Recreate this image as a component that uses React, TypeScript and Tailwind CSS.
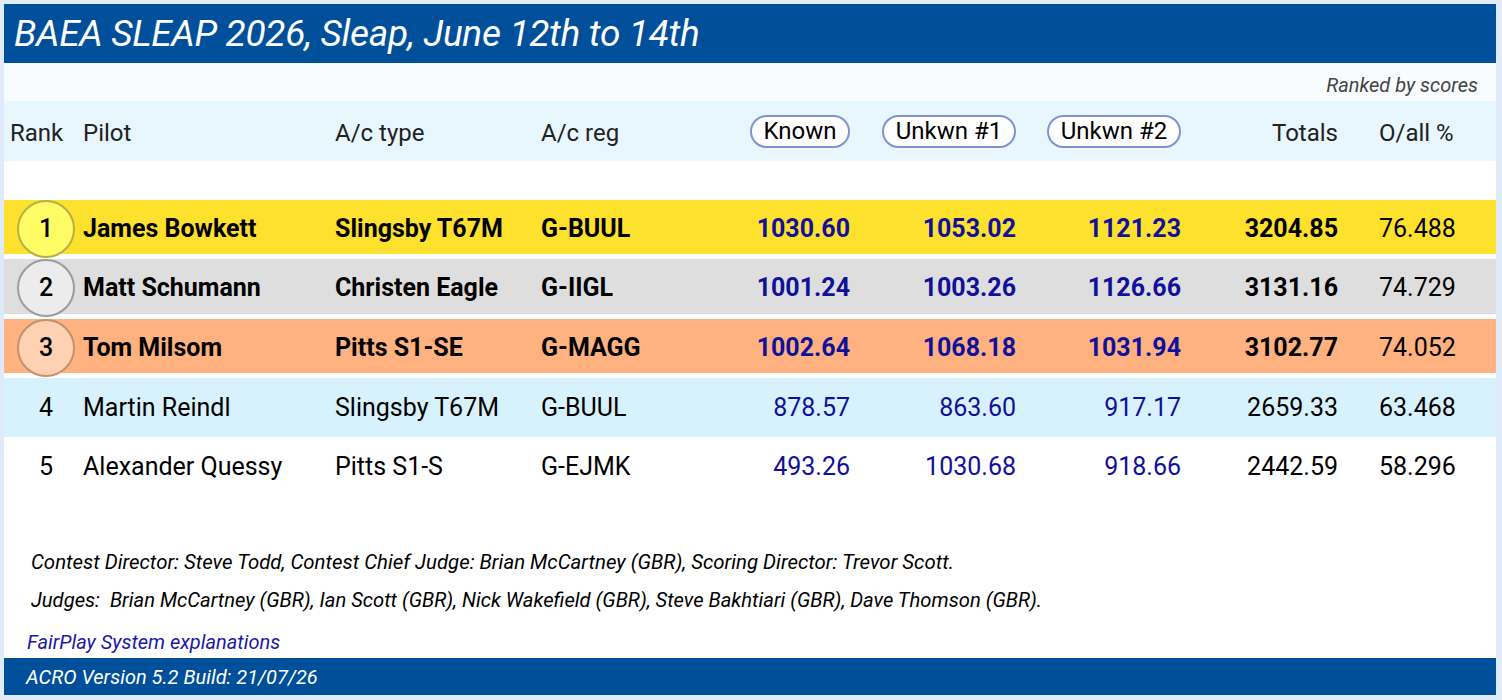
import React from "react";

type Row = {
  rank: number;
  pilot: string;
  type: string;
  reg: string;
  known: string;
  u1: string;
  u2: string;
  total: string;
  oall: string;
};

const rows: Row[] = [
  { rank: 1, pilot: "James Bowkett", type: "Slingsby T67M", reg: "G-BUUL", known: "1030.60", u1: "1053.02", u2: "1121.23", total: "3204.85", oall: "76.488" },
  { rank: 2, pilot: "Matt Schumann", type: "Christen Eagle", reg: "G-IIGL", known: "1001.24", u1: "1003.26", u2: "1126.66", total: "3131.16", oall: "74.729" },
  { rank: 3, pilot: "Tom Milsom", type: "Pitts S1-SE", reg: "G-MAGG", known: "1002.64", u1: "1068.18", u2: "1031.94", total: "3102.77", oall: "74.052" },
  { rank: 4, pilot: "Martin Reindl", type: "Slingsby T67M", reg: "G-BUUL", known: "878.57", u1: "863.60", u2: "917.17", total: "2659.33", oall: "63.468" },
  { rank: 5, pilot: "Alexander Quessy", type: "Pitts S1-S", reg: "G-EJMK", known: "493.26", u1: "1030.68", u2: "918.66", total: "2442.59", oall: "58.296" },
];

const GRID = "grid grid-cols-[79px_252px_206px_209px_100px_166px_165px_157px_158px] items-center";

const rowStyles: Record<number, { row: string; circle: string }> = {
  1: { row: "bg-[#fee12c] h-[54px] mb-[5px]", circle: "bg-[#fffc66] border-[#b8b046]" },
  2: { row: "bg-[#dedede] h-[55px] mb-[5px]", circle: "bg-[#ececec] border-[#9c9c9c]" },
  3: { row: "bg-[#ffb17f] h-[54px] mb-[5px]", circle: "bg-[#fed1b3] border-[#c4916e]" },
  4: { row: "bg-[#d7f2fd] h-[59px]", circle: "" },
  5: { row: "bg-white h-[60px]", circle: "" },
};

function Pill({ w, children }: { w: string; children: React.ReactNode }) {
  return (
    <span className={`inline-flex items-center justify-center h-[33px] rounded-full border-2 border-[#7f93d4] bg-white text-[24px] text-black leading-none ${w}`}>
      {children}
    </span>
  );
}

export default function App() {
  return (
    <div
      className="min-h-[700px] w-[1502px] bg-[#dfeafa] pt-[4px] pl-[4px] pb-[5px]"
      style={{ fontFamily: "Roboto, 'Noto Sans', Arial, sans-serif" }}
    >
      <div className="w-[1492px] bg-white flex flex-col">
        {/* Title */}
        <div className="h-[59px] bg-[#004f9b] flex items-center pl-[10px]">
          <h1 className="text-white italic text-[37px] leading-none tracking-[-0.3px]">
            BAEA SLEAP 2026, Sleap, June 12th to 14th
          </h1>
        </div>

        {/* Ranked by */}
        <div className="h-[38px] bg-[#f9fcff] flex items-center justify-end pr-[18px] pt-[6px]">
          <span className="italic text-[20px] text-[#444]">Ranked by scores</span>
        </div>

        {/* Header */}
        <div className={`${GRID} h-[60px] bg-[#e8f6fd] text-[24px] text-[#222] pt-[3px]`}>
          <div className="pl-[6px]">Rank</div>
          <div>Pilot</div>
          <div>A/c type</div>
          <div>A/c reg</div>
          <div className="flex justify-end -mt-[3px]">
            <Pill w="w-[100px]">Known</Pill>
          </div>
          <div className="flex justify-end -mt-[3px]">
            <Pill w="w-[134px]">Unkwn #1</Pill>
          </div>
          <div className="flex justify-end -mt-[3px]">
            <Pill w="w-[134px]">Unkwn #2</Pill>
          </div>
          <div className="text-right">Totals</div>
          <div className="pl-[41px]">O/all %</div>
        </div>

        {/* spacer */}
        <div className="h-[39px]" />

        {/* Rows */}
        <div className="flex flex-col">
          {rows.map((r) => {
            const st = rowStyles[r.rank];
            const top = r.rank <= 3;
            const weight = top ? "font-bold" : "font-normal";
            return (
              <div key={r.rank} className={`${GRID} ${st.row} text-[25px] text-black`}>
                <div className="flex items-center justify-center pl-[5px]">
                  {top ? (
                    <span className={`w-[58px] h-[58px] shrink-0 rounded-full border-2 flex items-center justify-center ${st.circle}`}>
                      <span className="text-[25px] font-medium">{r.rank}</span>
                    </span>
                  ) : (
                    <span className="text-[25px]">{r.rank}</span>
                  )}
                </div>
                <div className={weight}>{r.pilot}</div>
                <div className={weight}>{r.type}</div>
                <div className={weight}>{r.reg}</div>
                <div className={`text-right text-[#10109c] ${weight}`}>{r.known}</div>
                <div className={`text-right text-[#10109c] ${weight}`}>{r.u1}</div>
                <div className={`text-right text-[#10109c] ${weight}`}>{r.u2}</div>
                <div className={`text-right ${weight}`}>{r.total}</div>
                <div className="pl-[41px]">{r.oall}</div>
              </div>
            );
          })}
        </div>

        {/* Footer info */}
        <div className="h-[46px]" />
        <div className="h-[38px] flex items-center pl-[27px] italic text-[20.4px] text-black">
          Contest Director: Steve Todd, Contest Chief Judge: Brian McCartney (GBR), Scoring Director: Trevor Scott.
        </div>
        <div className="h-[38px] flex items-center pl-[27px] italic text-[20.2px] text-black whitespace-pre">
          {"Judges:  Brian McCartney (GBR), Ian Scott (GBR), Nick Wakefield (GBR), Steve Bakhtiari (GBR), Dave Thomson (GBR)."}
        </div>
        <div className="h-[39px] flex items-center pt-[6px] pl-[23px]">
          <a className="italic text-[20px] text-[#1a1aa6]" href="#">FairPlay System explanations</a>
        </div>
        <div className="h-[37px] bg-[#004f9b] flex items-center pl-[22px]">
          <span className="italic text-[20px] text-white">ACRO Version 5.2 Build: 21/07/26</span>
        </div>
      </div>
    </div>
  );
}
